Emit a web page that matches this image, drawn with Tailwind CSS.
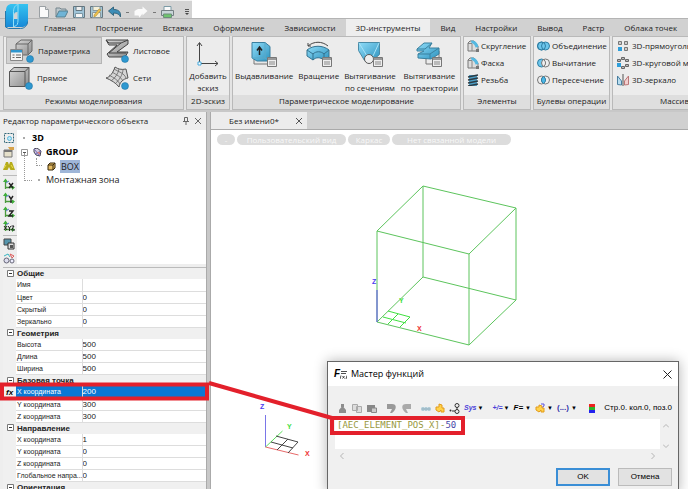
<!DOCTYPE html>
<html lang="ru">
<head>
    <meta charset="UTF-8">
    <meta name="viewport" content="width=device-width, initial-scale=1.0">
    <title>Без имени0*</title>
    <script src="https://cdn.jsdelivr.net/npm/@tailwindcss/browser@4"></script>
</head>
<body class="bg-[#c8c8c8] font-['Open_Sans','Noto_Sans',sans-serif] text-[8px] leading-3 text-[#222]">
    <!-- Shared icons -->
    <svg class="absolute size-0">
        <defs>
            <linearGradient id="logoFill" x1="0" y1="0" x2="0" y2="1"><stop offset="0" stop-color="#35c3f0"/><stop offset="1" stop-color="#1789d8"/></linearGradient>
            <linearGradient id="blueFill" x1="0" y1="0" x2="1" y2="1"><stop offset="0" stop-color="#8fdcf8"/><stop offset="1" stop-color="#2e93bf"/></linearGradient>
            <linearGradient id="greyFill" x1="0" y1="0" x2="1" y2="1"><stop offset="0" stop-color="#d8d8d8"/><stop offset="1" stop-color="#8d8d8d"/></linearGradient>
        </defs>
        <symbol id="table" viewBox="0 0 10 10"><path d="M.5.5h9v9h-9z" fill="#eee" stroke="#777"/><path d="M1 1h8v2H1z" fill="#999"/><path d="M2 5h6M2 7h6" stroke="#888"/></symbol>
        <symbol id="fillet" viewBox="0 0 12 12"><path d="M1 3l2-2h4l4 5v5H1z" fill="#ddd" stroke="#777"/><path d="M1 3.500h4v7.500" fill="none" stroke="#888"/><path d="M4 .5c4 0 6.500 2 7.500 6.500l-3 .5C8 5 7 4 4.500 3z" fill="#55b9e2"/><path d="M9 9h3v3H9z" fill="#777"/></symbol>
        <symbol id="axes" viewBox="0 0 12 12"><path d="M2.500 11V3M2 9.500h9" stroke="#4a9a3c" stroke-width="1.300"/><path d="M0 4l2.500-3.500L5 4zM9 7.500l3 2-3 2.500z" fill="#3fae3a"/><path d="M3 5l3-2" stroke="#5b7ed0"/></symbol>
    </svg>

    <div class="relative flex min-h-screen flex-col overflow-hidden">
        <!-- Quick access bar and ribbon tabs -->
        <header class="relative bg-[#d1d1d1]">
            <div class="flex h-[18px] bg-white">
                <div class="flex w-48 items-end gap-[5px] border-t border-[#f2f2f2] bg-[#d3d3d3] pl-[38px]">
                    <button aria-label="Создать"><svg class="size-3" viewBox="0 0 12 12"><path d="M1.500.5h6l3 3v8h-9z" fill="#fafafa" stroke="#9aa0a4"/><path d="M7.500.5v3h3" fill="#ddd" stroke="#9aa0a4"/></svg></button>
                    <button aria-label="Открыть"><svg class="h-3 w-[13px]" viewBox="0 0 13 12"><path d="M1 11V2h4l1 1h5v3" fill="#bcc7cc" stroke="#75858d"/><path d="M1 11l3-6h9l-3 6z" fill="#6fb4d6" stroke="#57808f"/></svg></button>
                    <button aria-label="Сохранить"><svg class="size-3" viewBox="0 0 12 12"><path d="M.5.5h11v11H.5z" fill="#9fc4d8" stroke="#65767f"/><path d="M3 .5h6v4H3z" fill="#eee" stroke="#65767f"/><path d="M2.500 7.500h7v4h-7z" fill="#f5f5f5" stroke="#7b97a5"/></svg></button>
                    <button aria-label="Сохранить как"><svg class="h-3 w-[13px]" viewBox="0 0 13 12"><path d="M.5.5h12v11H.5z" fill="#a5c6d5" stroke="#65767f"/><path d="M3 .5h7v4H3zM2.500 6.500h8v5h-8z" fill="#f5f0d8" stroke="#8b9a9f"/><path d="M4 9l5-6 2 1-5 6-2 1z" fill="#f0c14b" stroke="#9e8232" stroke-width=".5"/></svg></button>
                    <button aria-label="Отменить" class="flex items-center gap-[5px]"><svg class="h-3 w-[13px]" viewBox="0 0 13 12"><path d="M.5 5L5.500 1v2.500c4 0 7 1.500 7 5.500v2c-1-2.500-3-4-7-4v2.500z" fill="#3d8eb8" stroke="#35667e"/></svg><span class="h-px w-[3px] bg-[#777]"></span></button>
                    <button aria-label="Вернуть" class="flex items-center gap-[5px]"><svg class="h-3 w-[14px]" viewBox="0 0 14 12"><path d="M13.500 5l-5-4.500V3H4L.5 5v4.500h4l1 2 3-4v2z" fill="#fafafa"/></svg><span class="h-px w-[3px] bg-[#777]"></span></button>
                    <button aria-label="Печать"><svg class="h-3 w-[13px]" viewBox="0 0 13 12"><path d="M3 .5h7v4H3z" fill="#fafafa" stroke="#7c9ba6"/><path d="M.5 4.500h12v5H.5z" fill="#c9d6d9" stroke="#758084"/><path d="M2.500 8h8v3.500h-8z" fill="#6fc46f" stroke="#6c8e7b"/></svg></button>
                    <button aria-label="Настроить панель" class="ml-1"><svg class="size-3" viewBox="0 0 12 12"><path d="M2 3.500h4M2 5.500h4" stroke="#555"/><path d="M2 7h4L4 9z" fill="#444"/></svg></button>
                </div>
            </div>
            <button aria-label="Меню приложения" class="absolute top-1 left-1"><svg class="h-[25px] w-6" viewBox="0 0 24 25"><path d="M8 0h16v17c0 4-3 6-7 6H2V7c0-5 2-7 6-7z" fill="url(#logoFill)"/><path d="M14 0v16c0 4-1 6-4 6.500M9.500 23V9c0-5 1-7 4-8.500" stroke="#8fe0f8" fill="none"/><path d="M10 11c0-2 1-3 3.500-3v7H10z" fill="#d3d3d3"/><path d="M1.500 7v16l3 1.500h12c4 0 7-3 7-7" fill="none" stroke="#2678a8"/></svg></button>
            <nav class="flex h-[18px] border-t border-[#b4b4b4] pl-[34px] whitespace-nowrap *:px-[10px]">
                <button>Главная</button>
                <button>Построение</button>
                <button>Вставка</button>
                <button>Оформление</button>
                <button>Зависимости</button>
                <button class="bg-[#eee]">3D-инструменты</button>
                <button>Вид</button>
                <button>Настройки</button>
                <button>Вывод</button>
                <button>Растр</button>
                <button>Облака точек</button>
            </nav>
        </header>

        <!-- Ribbon -->
        <div class="flex h-[74px] gap-[2px] bg-[#e4e4e4] pl-[3px] whitespace-nowrap *:flex *:shrink-0 *:flex-col *:justify-between *:border *:border-[#b9b9b9] *:bg-[#ececec] [&_svg]:shrink-0">
            <section class="w-[181px]">
                <div class="grid grid-cols-[96px_1fr] pl-[2px] *:flex *:h-[27px] *:items-center *:gap-1 *:pl-[3px]">
                    <button class="border border-[#b5b5b5] bg-[#d2d2d2]"><svg class="h-[25px] w-6" viewBox="0 0 24 25"><path d="M6 6l5-4h11v11l-4 4H6z" fill="url(#greyFill)" stroke="#666"/><path d="M6 6h12v10M18 6l4-4" fill="none" stroke="#666"/><path d="M.5 11.500h12v11H.5z" fill="#f3f3f3" stroke="#888"/><path d="M1 12h11v2.500H1z" fill="#2e96cf"/><path d="M2.500 17h2M6 17h5M2.500 19.500h2M6 19.500h5" stroke="#666"/><circle cx="20" cy="21" r="3.500" fill="#2e98d0" stroke="#1b6f9d" stroke-width=".5"/></svg>Параметрика</button>
                    <button><svg class="h-[25px] w-6" viewBox="0 0 24 25"><path d="M1 2h22v4L12 14h11l-3 5H4l-2-3L12 7H4z" fill="url(#greyFill)" stroke="#444"/><path d="M1 2l3 3h12L4 15h17M16 5l7-3" fill="none" stroke="#444"/><circle cx="20" cy="21" r="3.500" fill="#2e98d0" stroke="#1b6f9d" stroke-width=".5"/></svg>Листовое</button>
                    <button><svg class="h-[25px] w-6" viewBox="0 0 24 25"><path d="M.5 6.500L5 2.500h15v15l-4 4H.5z" fill="url(#greyFill)" stroke="#555"/><path d="M.5 6.500H16v15M16 6.500l4-4" fill="none" stroke="#555"/><circle cx="20" cy="21" r="3.500" fill="#2e98d0" stroke="#1b6f9d" stroke-width=".5"/></svg>Прямое</button>
                    <button><svg class="h-[25px] w-6" viewBox="0 0 24 25"><path d="M1 13C5 12 8 8 10 2c3 2 6 3 11 2l2 9c-5 1-8 4-9 9C11 18 6 15 1 13z" fill="#d5d5d5" stroke="#555"/><path d="M4 10c5 3 9 5 11 9M7 7c5 3 9 5 11 9M9 4c5 3 10 4 12 9M14 4c-1 5-4 9-8 12M18 4c0 6-4 11-8 15" fill="none" stroke="#666" stroke-width=".8"/><circle cx="20" cy="21" r="3.500" fill="#2e98d0" stroke="#1b6f9d" stroke-width=".5"/></svg>Сети</button>
                </div>
                <h2 class="h-[14px] bg-[#dedede] text-center">Режимы моделирования</h2>
            </section>
            <section class="w-11">
                <button class="flex flex-col items-center pt-1"><svg class="h-[27px] w-6" viewBox="0 0 24 27"><path d="M3.500 23V2M3.500 22.500H22M1 5l2.500-3.500L6 5M19 20l3 2.500-3 2.500" fill="none" stroke="#444"/><path d="M2 21h3v3H2z" fill="#fff" stroke="#45a8dc"/></svg><span class="pt-[2px]">Добавить<br>эскиз</span></button>
                <h2 class="h-[14px] bg-[#dedede] text-center">2D-эскиз</h2>
            </section>
            <section class="w-[229px]">
                <div class="flex items-start gap-[5px] px-[2px] pt-1 *:flex *:flex-col *:items-center *:gap-[2px]">
                    <button><svg class="h-[27px] w-[26px]" viewBox="0 0 26 27"><path d="M3 18v5h14l4-3" fill="#e8e8e8" stroke="#777"/><path d="M1 1.500h13l5 4V20H6l-5-3z" fill="url(#blueFill)" stroke="#3a7f9f"/><path d="M14 1.500V17H1M14 17l5 3" fill="none" stroke="#5ba9c9"/><path d="M8.500 14V7M6 9.500L8.500 6 11 9.500" fill="none" stroke="#222" stroke-width="1.500"/><use href="#table" x="16" y="16" width="10" height="10"/></svg>Выдавливание</button>
                    <button><svg class="h-[27px] w-[26px]" viewBox="0 0 26 27"><path d="M2 5C8 0 16 0 22 5M2 2v3h3" fill="none" stroke="#444"/><path d="M1 9c6-5 16-5 22 0v7l-5 3c-4-3-8-3-11 0l-6-4z" fill="url(#blueFill)" stroke="#33728f"/><path d="M1 9l6 4c3-3 8-3 11 0l5-4M7 13v6M18 13v6" fill="none" stroke="#33728f"/><use href="#table" x="16" y="16" width="10" height="10"/></svg>Вращение</button>
                    <button><svg class="h-[27px] w-[26px]" viewBox="0 0 26 27"><path d="M1.500 1.500h21v12l-7 6h-8l-6-10z" fill="url(#blueFill)" stroke="#4a8ba6"/><path d="M2 2l8 13M22 2l-6 13" stroke="#a8e2f6"/><circle cx="12" cy="18" r="4.500" fill="#eee" stroke="#555"/><use href="#table" x="16" y="16" width="10" height="10"/></svg><span>Вытягивание<br>по сечениям</span></button>
                    <button><svg class="h-[27px] w-[26px]" viewBox="0 0 26 27"><path d="M10 15v8h8M23 10v6" fill="none" stroke="#777"/><path d="M1 8l7-6h8l-3 5h10v6l-8 5-13-1v-4l6-3H1z" fill="url(#blueFill)" stroke="#39809f"/><path d="M1 8h8l7-6M2 13h12l9-6M14 13v5" fill="none" stroke="#39809f"/><use href="#table" x="16" y="16" width="10" height="10"/></svg><span>Вытягивание<br>по траектории</span></button>
                </div>
                <h2 class="h-[14px] bg-[#dedede] text-center">Параметрическое моделирование</h2>
            </section>
            <section class="w-[68px]">
                <div class="flex flex-col gap-[5px] pt-[3px] pl-[3px] *:flex *:items-center *:gap-[2px]">
                    <button><svg class="size-3"><use href="#fillet"/></svg>Скругление</button>
                    <button><svg class="size-3"><use href="#fillet"/></svg>Фаска</button>
                    <button><svg class="size-3" viewBox="0 0 12 12"><path d="M2 1h8v11H2z" fill="#4d9fc5"/><path d="M1 3l10-2M1 6l10-2M1 9l10-2M1 12l10-2" stroke="#2d3b44" stroke-width="1.300"/></svg>Резьба</button>
                </div>
                <h2 class="h-[14px] bg-[#dedede] text-center">Элементы</h2>
            </section>
            <section class="w-[77px]">
                <div class="flex flex-col gap-[5px] pt-[3px] pl-[3px] *:flex *:items-center *:gap-[2px]">
                    <button><svg class="h-3 w-[13px]" viewBox="0 0 13 12"><circle cx="4.500" cy="6" r="4" fill="#6cc6ec" stroke="#2f7ea3"/><circle cx="8.500" cy="6" r="4" fill="#6cc6ec" stroke="#2f7ea3"/><circle cx="4.500" cy="6" r="4" fill="none" stroke="#2f7ea3"/></svg>Объединение</button>
                    <button><svg class="h-3 w-[13px]" viewBox="0 0 13 12"><circle cx="4.500" cy="6" r="4" fill="#6cc6ec" stroke="#2f7ea3"/><circle cx="8.500" cy="6" r="4" fill="#eee" stroke="#777"/><path d="M6.500 2.500a4 4 0 010 7" fill="none" stroke="#777"/></svg>Вычитание</button>
                    <button><svg class="h-3 w-[13px]" viewBox="0 0 13 12"><circle cx="4.500" cy="6" r="4" fill="#eee" stroke="#777"/><circle cx="8.500" cy="6" r="4" fill="#eee" stroke="#777"/><path d="M6.500 2.500a4 4 0 010 7a4 4 0 010-7" fill="#4cb8e8" stroke="#2f7ea3"/></svg>Пересечение</button>
                </div>
                <h2 class="h-[14px] bg-[#dedede] text-center">Булевы операции</h2>
            </section>
            <section class="w-[120px]">
                <div class="flex flex-col gap-[5px] pt-[3px] pl-1 *:flex *:items-center *:gap-[3px]">
                    <button><svg class="size-3" viewBox="0 0 12 12"><path d="M1.500 1.500h3v3h-3zM7.500 1.500h3v3h-3zM7.500 7.500h3v3h-3z" fill="#ccc" stroke="#777"/><path d="M1 7h4v4H1z" fill="#2e9fdb"/></svg>3D-прямоугольный массив</button>
                    <button><svg class="size-3" viewBox="0 0 12 12"><path d="M4.500.5h3v2h-3zM.5 2.500h3v2h-3zM8.500 2.500h3v2h-3zM8.500 7.500h3v2h-3zM4.500 9.500h3v2h-3z" fill="#bbb" stroke="#666"/><path d="M0 6h4v4H0z" fill="#2e9fdb"/></svg>3D-круговой массив</button>
                    <button><svg class="size-3" viewBox="0 0 12 12"><path d="M.5 10.500V2l4 5v4z" fill="#b9def0" stroke="#4a7fa0"/><path d="M11.500 10.500V2l-4 5v4z" fill="#f3cfcf" stroke="#b77"/><path d="M6 0v12" stroke="#555"/></svg>3D-зеркало</button>
                </div>
                <h2 class="h-[14px] bg-[#dedede] pl-[47px]">Массив</h2>
            </section>
        </div>

        <!-- Work area -->
        <div class="flex flex-1 pt-[2px]">
            <!-- Parametric object editor -->
            <aside class="mr-[3px] flex w-[207px] shrink-0 flex-col border-r border-[#aaa] bg-[#eee] pl-[3px]">
                <div class="flex h-[18px] items-center justify-between pr-1">
                    <h2>Редактор параметрического объекта</h2>
                    <div class="flex gap-1 text-[#666]">
                        <button aria-label="Закрепить"><svg class="size-2" viewBox="0 0 8 8"><path d="M2.500.5h3v4h-3zM1 4.500h6M4 5v3" fill="none" stroke="currentColor"/></svg></button>
                        <button aria-label="Закрыть"><svg class="size-2" viewBox="0 0 8 8"><path d="M1 1l6 6M7 1L1 7" stroke="currentColor"/></svg></button>
                    </div>
                </div>
                <div class="flex h-[134px]">
                    <div class="flex w-[14px] flex-col gap-[2px] py-[2px] [&>button]:size-3">
                        <button aria-label="Выбрать"><svg viewBox="0 0 12 12"><path d="M1.500 1.500h9v9h-9z" fill="none" stroke="#367" stroke-dasharray="2 1"/><circle cx="6.500" cy="6.500" r="2" fill="#bfe9f8" stroke="#58b7dc"/></svg></button>
                        <button aria-label="Свойства"><svg viewBox="0 0 12 12"><path d="M1 4h8v7H1z" fill="#e5e0ca" stroke="#777"/><path d="M1 4h8v2H1z" fill="#777"/><path d="M5 1h6v3H7z" fill="#d7a24a"/></svg></button>
                        <button aria-label="Найти"><svg viewBox="0 0 12 12"><path d="M3 2h2l1 3 1-3h2l3 8H7.500L6 7l-1.500 3H0z" fill="#b5ac1b"/><path d="M1 8l2-3M8 5l2 3" stroke="#eee04c"/></svg></button>
                        <hr class="mt-px border-[#bbb]">
                        <button aria-label="Ось X"><svg viewBox="0 0 12 12"><use href="#axes"/><path d="M6 5l4 5M10 5l-4 5" stroke="#222" stroke-width="1.400"/></svg></button>
                        <button aria-label="Ось Y"><svg viewBox="0 0 12 12"><use href="#axes"/><path d="M6 4l2 3 2-3M8 7v4" fill="none" stroke="#222" stroke-width="1.400"/></svg></button>
                        <button aria-label="Ось Z"><svg viewBox="0 0 12 12"><use href="#axes"/><path d="M6 5h4L6 10h4" fill="none" stroke="#222" stroke-width="1.400"/></svg></button>
                        <button aria-label="Оси XYZ"><svg viewBox="0 0 12 12"><use href="#axes"/><path d="M1 6l3 4M4 6l-3 4M5 6l1.500 2L8 6M6.500 8v3M8.500 6H11l-2.500 4H12" fill="none" stroke="#222"/></svg></button>
                        <hr class="mt-px border-[#bbb]">
                        <button aria-label="Вид"><svg viewBox="0 0 12 12"><path d="M1 1h7v6H1z" fill="#5695ac" stroke="#444"/><path d="M5 5h6v6H5z" fill="#ddd" stroke="#333"/><path d="M7 7h3v3H7z" fill="#555"/></svg></button>
                        <button aria-label="Связи"><svg viewBox="0 0 12 12"><circle cx="3.500" cy="8.500" r="2.500" fill="#dde" stroke="#667"/><circle cx="9" cy="9" r="2" fill="#eef" stroke="#667"/><path d="M1 4l4-2 2 3" fill="none" stroke="#36b4c0"/><path d="M7 2l4 2-2 2z" fill="none" stroke="#dc5b5b"/></svg></button>
                    </div>
                    <ul class="flex-1 bg-white pt-px pl-[3px] text-[9px] leading-[14px] *:flex *:h-[14px] *:items-center">
                        <li class="font-bold text-black"><span class="mx-[3px] size-[2px] bg-[#aaa]"></span><span class="pl-1">3D</span></li>
                        <li class="gap-1 pl-px font-bold text-black"><svg class="size-[7px]" viewBox="0 0 7 7"><path d="M.5.5h6v6h-6z" fill="#fff" stroke="#999"/><path d="M2 3.500h3" stroke="#555"/></svg><svg class="ml-px size-[9px]" viewBox="0 0 9 9"><path d="M1 1l3-1 4 3-1 5-4-1-2-3z" fill="#d6cede" stroke="#445"/><path d="M1 1l6 7M8 3L2 6" stroke="#7368b7"/><path d="M4 4h3v3z" fill="#d37b7b"/></svg>GROUP</li>
                        <li class="gap-1 pl-[16px]"><span class="-mt-2 h-2 w-[6px] border-b border-l border-dotted border-[#999]"></span><svg class="ml-px size-[9px]" viewBox="0 0 9 9"><path d="M1 3l2-2h5v5L6 8H1z" fill="#e7bd63" stroke="#3b2a0d"/><path d="M1 3h5v5M6 3l2-2" fill="none" stroke="#3b2a0d"/></svg><span class="bg-[#9fb6d8] px-px leading-[13px]">BOX</span></li>
                        <li class="pl-1"><span class="-mt-[26px] h-7 w-2 border-b border-l border-dotted border-[#999]"></span><span class="mx-[6px] size-[2px] bg-[#aaa]"></span>Монтажная зона</li>
                    </ul>
                </div>
                <!-- Properties -->
                <table class="mt-[3px] w-full table-fixed border-collapse border-t border-[#bbb] bg-white font-['Liberation_Sans',sans-serif] leading-[11px]">
                    <colgroup><col class="w-[13px]"><col class="w-[66px]"><col></colgroup>
                    <tbody id="props"></tbody>
                </table>
            </aside>

            <!-- Document -->
            <main class="flex min-w-0 flex-1 flex-col border-l border-[#aaa]">
                <div class="flex h-[17px] bg-[#d0d0d0]">
                    <div class="flex w-24 items-center justify-between bg-[#ececec] pr-1 pl-[18px]">
                        <span>Без имени0*</span>
                        <button aria-label="Закрыть вкладку"><svg class="size-2" viewBox="0 0 8 8"><path d="M1 1l6 6M7 1L1 7" stroke="#555"/></svg></button>
                    </div>
                </div>
                <div class="relative flex-1 overflow-hidden border-t border-[#aaa] bg-white">
                    <div class="flex gap-[2px] pt-1 pl-[6px] leading-[11px] whitespace-nowrap text-[#f8f8f8] *:h-[11px] *:rounded-full *:bg-[#dcdcdc]">
                        <button class="w-[18px]">-</button>
                        <button class="w-[109px]">Пользовательский вид</button>
                        <button class="w-[42px]">Каркас</button>
                        <button class="w-[119px]">Нет связанной модели</button>
                    </div>
                    <!-- Model wireframe -->
                    <svg class="absolute top-0 left-0 h-[359px] w-[478px]" viewBox="211 130 478 359" fill="none">
                        <path d="M377 231L423 186 516 208 469 254zM377 322L423 277 516 300 469 345zM377 231v91M423 186v91M516 208v92M469 254v91" stroke="#5cc45c"/>
                        <path d="M383 317l23 6M388 311l22 6-10 10M388 324l10-10" stroke="#3fe03f"/>
                        <path d="M377 322v-32" stroke="#5a4cf0"/>
                        <path d="M265.500 447v-32" stroke="#7a76e8"/>
                        <path d="M265.500 447l17-16" stroke="#5ee05e"/>
                        <path d="M265.500 447l33 8" stroke="#e86a6a"/>
                        <path d="M271 442l22 6M276 436l22 6-10 11M277 450l11-11" stroke="#444"/>
                        <g font-family="Liberation Sans, sans-serif" font-size="7" font-weight="bold">
                            <text x="372" y="284" fill="#4a3cf0">Z</text>
                            <text x="399" y="303" fill="#3fe03f">Y</text>
                            <text x="417" y="331" fill="#e33">X</text>
                            <text x="260" y="409" fill="#4a3cf0">Z</text>
                            <text x="287" y="429" fill="#3fe03f">Y</text>
                            <text x="305" y="456" fill="#e33">X</text>
                        </g>
                    </svg>

                    <!-- Function wizard -->
                    <div role="dialog" aria-labelledby="wizardTitle" class="absolute right-[9px] bottom-0 w-[352px] border border-[#666] bg-[#f0f0f0] font-['Liberation_Sans',sans-serif] text-black shadow-[0_0_12px_rgba(0,0,0,0.3)]">
                        <div class="flex h-6 items-center gap-[3px] bg-white px-[6px]">
                            <span class="flex w-[14px] items-center text-[10px] font-bold italic">F<svg class="h-[9px] w-[7px]" viewBox="0 0 7 9"><path d="M1 1.500h6M1 3.500h5M1 5.500L0 9M2.500 6l2 2.500M4.500 6l-2 2.500M7 5.500L6 9" fill="none" stroke="#222" stroke-width=".8"/></svg></span>
                            <h2 id="wizardTitle" class="flex-1 font-['Open_Sans',sans-serif] text-[9px]">Мастер функций</h2>
                            <button aria-label="Закрыть"><svg class="size-[9px]" viewBox="0 0 9 9"><path d="M.5.5l8 8M8.500.5l-8 8" stroke="#222"/></svg></button>
                        </div>
                        <div class="mt-4 flex h-3 items-center pl-[10px] *:shrink-0">
                            <button aria-label="Вырезать"><svg class="size-[9px]" viewBox="0 0 9 9"><path d="M3 0h3v3h-.5L8 6v3H1V6l2.500-3H3z" fill="#8d8d8d"/></svg></button>
                            <button aria-label="Копировать" class="ml-[5px]"><svg class="h-[9px] w-[10px]" viewBox="0 0 10 9"><path d="M.5.5h5v6h-5zM4.500 2.500h5v6h-5z" fill="#ddd" stroke="#aaa"/></svg></button>
                            <button aria-label="Вставить" class="ml-[5px]"><svg class="h-[9px] w-[10px]" viewBox="0 0 10 9"><path d="M0 1h8v7H0z" fill="#888"/><path d="M4.500 4h5v4.500h-5z" fill="#ccc" stroke="#888"/></svg></button>
                            <button aria-label="Отменить ввод" class="ml-[10px]"><svg class="size-[9px]" viewBox="0 0 9 9"><path d="M0 0h5c5 0 5 5 0 9H3l2-4H0z" fill="#999"/></svg></button>
                            <button aria-label="Повторить ввод" class="ml-[6px]"><svg class="size-[9px]" viewBox="0 0 9 9"><path d="M9 0H4c-5 0-5 5 0 9h2L4 5h5z" fill="#aaa"/></svg></button>
                            <button aria-label="Переменная" class="ml-[10px]"><svg class="h-2 w-[10px]" viewBox="0 0 10 8"><path d="M0 3h10v4H0z" fill="#d3e3ea"/><path d="M1 4h2v2H1zM4 4h2v2H4zM7 4h2v2H7z" fill="none" stroke="#7fa3b5" stroke-width=".7"/></svg></button>
                            <button aria-label="Объект" class="ml-[4px]"><svg class="size-[10px]" viewBox="0 0 10 10"><path d="M1 4h3V1l3 1v3h2v4H6V7l-2 2-3-2z" fill="#ffd24a" stroke="#e29b1d"/></svg></button>
                            <button aria-label="Связь" class="ml-[4px]"><svg class="size-[11px]" viewBox="0 0 11 11"><circle cx="8" cy="2.500" r="2" fill="none" stroke="#333"/><circle cx="8" cy="8.500" r="2" fill="none" stroke="#333"/><circle cx="1.500" cy="7.500" r="1" fill="#333"/><path d="M8 4v3M3 8h3" stroke="#333"/></svg></button>
                            <button class="ml-1 flex items-center gap-px"><span class="text-[7px] font-bold text-[#4b42d8] italic">Sys</span><span class="text-[6px]">▼</span></button>
                            <button class="ml-[9px] flex items-center gap-px"><span class="text-[7px] font-bold text-[#4b42d8] italic">+/=</span><span class="text-[6px]">▼</span></button>
                            <button class="ml-1 flex items-center gap-[2px]"><span class="font-bold italic">F=</span><span class="text-[6px]">▼</span></button>
                            <button aria-label="Справка" class="ml-1 flex items-center gap-[2px]"><svg class="size-[10px]" viewBox="0 0 10 10"><path d="M1 4h3V2l3 1v2h2v4H6V7l-2 2-3-2z" fill="#ffd24a" stroke="#e29b1d"/><path d="M6 1h3v2L7.500 4" fill="none" stroke="#5a50e0"/></svg><span class="text-[6px]">▼</span></button>
                            <button class="ml-1 flex items-center gap-[2px]"><span class="font-bold text-[#33a]">(...)</span><span class="text-[6px]">▼</span></button>
                            <button aria-label="Цвета" class="ml-3"><svg class="h-[9px] w-[6px]" viewBox="0 0 6 9"><path d="M0 0h6v3H0z" fill="#e22"/><path d="M0 3h6v3H0z" fill="#2db52d"/><path d="M0 6h6v3H0z" fill="#22e"/></svg></button>
                            <output class="mr-[6px] ml-auto">Стр.0. кол.0, поз.0</output>
                        </div>
                        <div class="mt-[5px] ml-[7px] grid grid-cols-[1fr_18px] grid-rows-[30px_14px] text-[#b5b5b5]">
                            <div contenteditable="true" role="textbox" aria-label="Выражение" spellcheck="false" class="bg-white px-[2px] font-['DejaVu_Sans_Mono',monospace] text-[9px] text-[#99993d] outline-none">[AEC_ELEMENT_POS_X]-<span class="text-[#4a49a8]">50</span></div>
                            <div class="flex flex-col justify-between pt-1 pr-[6px] *:mx-auto">
                                <svg class="size-[6px]" viewBox="0 0 6 6"><path d="M0 4.500l3-3 3 3" fill="none" stroke="currentColor"/></svg>
                                <svg class="size-[6px]" viewBox="0 0 6 6"><path d="M0 1.500l3 3 3-3" fill="none" stroke="currentColor"/></svg>
                            </div>
                            <div class="flex items-center justify-between px-[4px]">
                                <svg class="size-[6px]" viewBox="0 0 6 6"><path d="M4.500 0l-3 3 3 3" fill="none" stroke="currentColor"/></svg>
                                <svg class="size-[6px]" viewBox="0 0 6 6"><path d="M1.500 0l3 3-3 3" fill="none" stroke="currentColor"/></svg>
                            </div>
                        </div>
                        <div class="mt-[5px] mb-[6px] flex justify-end gap-2 pr-[6px] *:h-[18px] *:w-[54px] *:bg-[#e2e2e2]">
                            <button class="border-2 border-[#3a8ed6]">OK</button>
                            <button class="border border-[#bbb]">Отмена</button>
                        </div>
                    </div>
                </div>
            </main>
        </div>

        <!-- Red callout from the property row to the expression -->
        <svg class="pointer-events-none absolute top-0 left-0 h-[489px] w-[688px]" viewBox="0 0 688 489" fill="none" stroke="#e3202b" stroke-width="4">
            <path d="M2 384.500h205v14H2zM209 383l123 35M332 418h131v15H332z"/>
        </svg>
    </div>

    <script>
        const groups = [
            ['Общие', [['Имя', ''], ['Цвет', '0'], ['Скрытый', '0'], ['Зеркально', '0']]],
            ['Геометрия', [['Высота', '500'], ['Длина', '500'], ['Ширина', '500']]],
            ['Базовая точка', [['X координата', '200', true], ['Y координата', '300'], ['Z координата', '300']]],
            ['Направление', [['X координата', '1'], ['Y координата', '0'], ['Z координата', '0'], ['Глобальное напра...', '0']]],
            ['Ориентация', []]
        ];

        document.getElementById('props').innerHTML = groups.map(([title, rows], g) => `
            <tr class="h-[11px] bg-[#f0f0f0]">
                <td class="p-0"><button aria-label="Свернуть" class="ml-1 block"><svg class="size-[7px]" viewBox="0 0 7 7"><path d="M.5.5h6v6h-6z" fill="#fff" stroke="#777"/><path d="M2 3.500h3" stroke="#333"/></svg></button></td>
                <th colspan="2" class="p-0 pl-px text-left leading-[11px]">${title}</th>
            </tr>
            ${rows.map(([name, value, active], i) => `
                <tr class="h-3 ${active ? 'bg-[#0a78d4] text-white' : ''}">
                    <td class="bg-[#f0f0f0] p-0 pl-[3px] font-bold text-black italic">${active ? 'fx' : ''}</td>
                    <td class="overflow-hidden border-r border-b border-[#ddd] p-0 pl-px text-[7px] whitespace-nowrap"><label for="p${g}${i}" class="block">${name}</label></td>
                    <td class="border-b border-[#ddd] p-0"><input id="p${g}${i}" value="${value}" class="block h-[11px] w-full"></td>
                </tr>
            `).join('')}
        `).join('');
    </script>
</body>
</html>
